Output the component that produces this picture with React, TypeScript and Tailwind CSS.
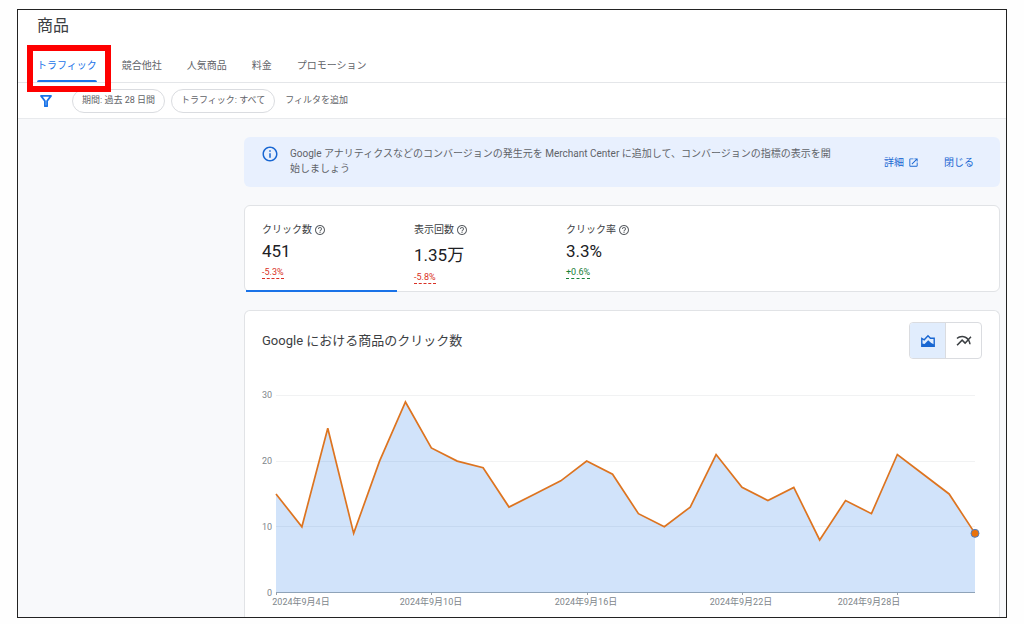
import {
  MdHelpOutline,
  MdInfoOutline,
  MdMultilineChart,
  MdOpenInNew,
} from "react-icons/md";

const tabs = ["トラフィック", "競合他社", "人気商品", "料金", "プロモーション"];

const chips = ["期間: 過去 28 日間", "トラフィック: すべて"];

const metrics = [
  { label: "クリック数", value: "451", change: "-5.3%", up: false },
  { label: "表示回数", value: "1.35万", change: "-5.8%", up: false },
  { label: "クリック率", value: "3.3%", change: "+0.6%", up: true },
];

const clicks = [
  15, 10, 25, 9, 20, 29, 22, 20, 19, 13, 15, 17, 20, 18, 12, 10, 13, 21, 16, 14,
  16, 8, 14, 12, 21, 18, 15, 9,
];

// label position is separate from the tick, the outer ones are pushed inwards
const dates = [
  { day: 0, x: 56, text: "2024年9月4日" },
  { day: 6, x: 186, text: "2024年9月10日" },
  { day: 12, x: 341, text: "2024年9月16日" },
  { day: 18, x: 496, text: "2024年9月22日" },
  { day: 24, x: 624, text: "2024年9月28日" },
];

const LEFT = 31;
const RIGHT = 730;
const BASE = 217;

const toX = (day: number) => LEFT + (day * (RIGHT - LEFT)) / (clicks.length - 1);
const toY = (value: number) => BASE + 0.5 - value * 6.57;

function ClicksChart() {
  const line = clicks.map((v, i) => `${toX(i)},${toY(v)}`).join(" ");
  const last = clicks.length - 1;

  return (
    <svg
      viewBox="0 0 754 242"
      className="block w-full"
      role="img"
      aria-label="クリック数"
    >
      {[10, 20, 30].map((v) => (
        <rect key={v} x={LEFT} y={Math.floor(toY(v))} width={RIGHT - LEFT} height="1" fill="#f1f2f3" />
      ))}
      <polygon
        points={`${LEFT},${BASE} ${line} ${RIGHT},${BASE}`}
        fill="#1a73e8"
        fillOpacity="0.2"
      />
      <rect x={LEFT} y={BASE} width={RIGHT - LEFT} height="1" fill="#8fa3b8" />
      <polyline points={line} fill="none" stroke="#dd7420" strokeWidth="1.7" />
      <circle cx={toX(last)} cy={toY(clicks[last])} r="4" fill="#e8710a" stroke="#4f7fc4" />
      {[0, 10, 20, 30].map((v) => (
        <text key={v} x="27" y={toY(v) + 3} textAnchor="end" fontSize="9" fill="#80868b">
          {v}
        </text>
      ))}
      {dates.map((d) => (
        <g key={d.day}>
          <rect x={Math.round(toX(d.day))} y={BASE + 1} width="1" height="2" fill="#9aa0a6" />
          <text x={d.x} y="230" textAnchor="middle" fontSize="9" fill="#80868b">
            {d.text}
          </text>
        </g>
      ))}
    </svg>
  );
}

function FilterIcon() {
  return (
    <svg viewBox="0 0 14 14" className="w-[14px] h-[14px]" aria-hidden="true">
      <path
        d="M2 1.9H12L8.1 7V12.2H5.9V7Z"
        fill="none"
        stroke="#1a73e8"
        strokeWidth="1.8"
        strokeLinejoin="round"
      />
    </svg>
  );
}

function AreaIcon() {
  return (
    <svg viewBox="0 0 16 14" className="w-4 h-[14px]" aria-hidden="true">
      <path
        d="M1.8 12.3V4.4L4.2 5.8L8 1.7L10.4 4.2H14.2V12.3Z"
        fill="none"
        stroke="#1967d2"
        strokeWidth="1.4"
      />
      <path d="M1.8 12.8V9.4L4.6 10L8.2 6.2L11.2 9L14.2 10.6V12.8Z" fill="#1967d2" />
    </svg>
  );
}

export default function App() {
  return (
    <div className="min-h-screen bg-[#fefefe] pt-[9px] pb-[6px] px-[17px] font-['Roboto','Noto_Sans_CJK_JP',sans-serif] text-[#5f6368]">
      <div className="border border-[#222222] bg-[#f8f9fb] overflow-hidden">
        <header className="bg-white">
          <h1 className="pl-[19px] pt-1 text-base leading-6 text-[#3c4043]">商品</h1>
          <nav className="flex gap-[25px] pl-[19px] pt-2 border-b border-[#e4e6e9]">
            {tabs.map((tab, i) => (
              <a
                key={tab}
                href="#"
                className={
                  i === 0
                    ? "relative h-9 pt-[10px] text-[10px] leading-5 text-[#1a73e8] whitespace-nowrap"
                    : "h-9 pt-[10px] text-[10px] leading-5 whitespace-nowrap"
                }
              >
                {tab}
                {i === 0 && (
                  <>
                    <span className="absolute inset-x-0 bottom-0 h-[2px] rounded-t-sm bg-[#1a73e8]" />
                    <span className="absolute -left-[10px] -right-[14px] -top-[1px] -bottom-[10px] border-6 border-[#fe0000] pointer-events-none z-10" />
                  </>
                )}
              </a>
            ))}
          </nav>
          <div className="flex items-center h-9 pl-[21px] border-b border-[#e8eaed] text-[9px]">
            <button type="button" aria-label="フィルタ">
              <FilterIcon />
            </button>
            <div className="flex gap-[6px] pl-[19px]">
              {chips.map((chip) => (
                <button
                  key={chip}
                  type="button"
                  className="h-6 px-[9px] rounded-full border border-[#dadce0] whitespace-nowrap"
                >
                  {chip}
                </button>
              ))}
            </div>
            <button type="button" className="pl-[10px] whitespace-nowrap">
              フィルタを追加
            </button>
          </div>
        </header>

        <main className="flex flex-col gap-[18px] pt-[18px] pl-[226px] pr-[6px]">
          <section className="flex items-center h-[50px] pl-[17px] pr-[26px] rounded-md bg-[#e8f0fe] text-[10px]">
            <MdInfoOutline size={18} className="shrink-0 self-start mt-2 text-[#1967d2]" />
            <p className="flex-1 self-start pl-[11px] pt-[9px] leading-[15px]">
              Google アナリティクスなどのコンバージョンの発生元を Merchant Center
              に追加して、コンバージョンの指標の表示を開
              <br />
              始しましょう
            </p>
            <a href="#" className="flex items-center gap-1 text-[#1967d2]">
              詳細
              <MdOpenInNew size={11} />
            </a>
            <button type="button" className="pl-[25px] text-[#1967d2]">
              閉じる
            </button>
          </section>

          <section className="flex h-[87px] rounded-md border border-[#e1e3e6] bg-white">
            {metrics.map((m, i) => (
              <div key={m.label} className="relative w-[152px] pl-[17px] pt-4">
                <div className="flex items-center gap-[2px] text-[10px] leading-4 text-[#3c4043]">
                  {m.label}
                  <MdHelpOutline size={12} className="text-[#5f6368]" />
                </div>
                <div className="pt-[3px] text-[17px] leading-[normal] text-[#202124]">{m.value}</div>
                <div
                  className={
                    m.up
                      ? "w-fit mt-[5px] text-[9px] leading-3 border-b border-dashed text-[#188038]"
                      : "w-fit mt-[5px] text-[9px] leading-3 border-b border-dashed text-[#d93025]"
                  }
                >
                  {m.change}
                </div>
                {i === 0 && (
                  <span className="absolute left-[1px] right-0 -bottom-px h-[2px] bg-[#1a73e8]" />
                )}
              </div>
            ))}
          </section>

          <section className="rounded-t-md border border-b-0 border-[#e1e3e6] bg-white">
            <div className="flex items-start justify-between h-16 pt-[11px] pl-[17px] pr-[17px]">
              <h2 className="text-[13px] leading-[38px] text-[#3c4043]">
                Google における商品のクリック数
              </h2>
              <div className="flex h-[37px] rounded-sm border border-[#dadce0] overflow-hidden">
                <button
                  type="button"
                  aria-label="面グラフ"
                  className="flex items-center justify-center w-9 border-r border-[#dadce0] bg-[#e1edfd]"
                >
                  <AreaIcon />
                </button>
                <button
                  type="button"
                  aria-label="折れ線グラフ"
                  className="flex items-center justify-center w-[35px] text-[#3c4043]"
                >
                  <MdMultilineChart size={18} />
                </button>
              </div>
            </div>
            <ClicksChart />
          </section>
        </main>
      </div>
    </div>
  );
}
